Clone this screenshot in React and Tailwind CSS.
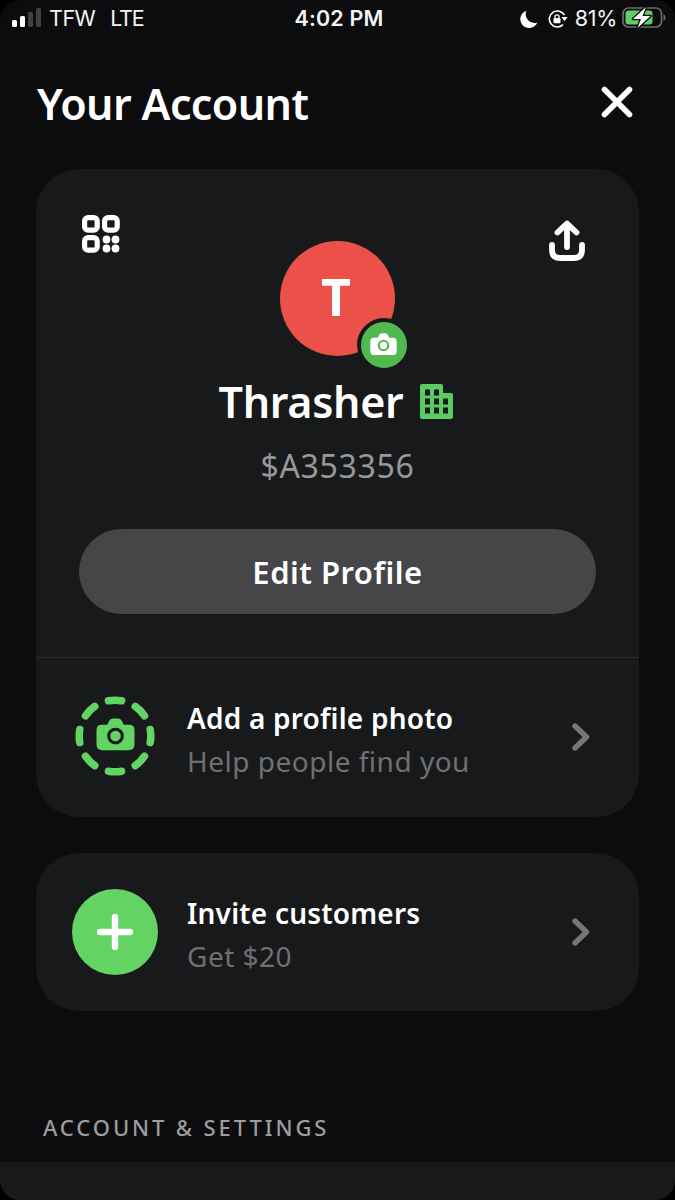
const CameraIcon = ({ className, ring }) => (
  <svg viewBox="0 0 40 34" className={className}>
    <path
      d="M6 7h5.500l2-4.200Q15 .5 17.500 .5h5q2.500 0 4 2.300l2 4.200H34q5.500 0 5.500 5.500v14.500q0 6-6 6h-27q-6 0-6-6V12.500Q.5 7 6 7z"
      fill="currentColor"
    />
    <circle cx="20" cy="18.500" r="7" fill="none" stroke={ring} strokeWidth="3.200" />
  </svg>
);

const ChevronIcon = () => (
  <svg viewBox="0 0 18 28" className="h-7 w-[18px] text-[#767779]">
    <path d="M3 3l11.500 11L3 25" fill="none" stroke="currentColor" strokeWidth="5.400" strokeLinecap="round" strokeLinejoin="round" />
  </svg>
);

function StatusBar() {
  return (
    <div className="grid h-9 grid-cols-3 items-center pl-3 pr-[9px] font-[Inter,sans-serif] text-[21.500px] leading-none text-[#f4f4f6]">
      <div className="flex items-center">
        <svg viewBox="0 0 30 20" className="h-5 w-[30px] shrink-0">
          <rect x="0" y="12" width="5" height="7" rx="1.500" fill="#fff" />
          <rect x="8" y="8" width="5" height="11" rx="1.500" fill="#fff" />
          <rect x="16" y="4" width="5" height="15" rx="1.500" fill="#404042" />
          <rect x="24" y="0" width="5" height="19" rx="1.500" fill="#404042" />
        </svg>
        <span className="ml-[7px] pt-0.5 tracking-[-0.500px]">TFW</span>
        <span className="ml-[15px] pt-0.5 tracking-[-1.300px]">LTE</span>
      </div>
      <div className="pt-0.5 text-center font-semibold tracking-[0.150px]">4:02 PM</div>
      <div className="flex items-center justify-end">
        <svg viewBox="0 0 18 18" className="mt-0.5 h-[18px] w-[18px]">
          <path d="M6.500 .8A8.800 8.800 0 1 0 17.300 12.400 8.600 8.600 0 0 1 6.500 .8z" fill="#fff" />
        </svg>
        <svg viewBox="0 0 20 18" className="ml-[10px] mt-0.5 h-[18px] w-5">
          <path d="M16.400 5.200A8 8 0 1 0 15 14.600" fill="none" stroke="#fff" strokeWidth="1.600" />
          <path d="M13.400 7h6.200l-3 4.200z" fill="#fff" />
          <rect x="5.500" y="8" width="7" height="5.200" rx="1" fill="#fff" />
          <path d="M7 8.500V6.800a2 2 0 0 1 4 0v1.700" fill="none" stroke="#fff" strokeWidth="1.300" />
        </svg>
        <span className="ml-[7px] pt-0.5 tracking-[-0.300px]">81%</span>
        <svg viewBox="0 0 44 24" className="ml-[5px] h-6 w-11">
          <rect x="1" y="2" width="38.500" height="19" rx="5.500" fill="none" stroke="#6c6c6e" strokeWidth="1.700" />
          <path d="M41.500 8q2 1.300 2 3.500t-2 3.500z" fill="#6c6c6e" />
          <rect x="3.500" y="4.500" width="27" height="14" rx="3.200" fill="#5fd068" />
          <path d="M24 1L11 13h8L15.500 22 28.500 10h-8z" fill="#fff" stroke="#0c0c0e" strokeWidth="2.600" strokeLinejoin="round" paintOrder="stroke" />
        </svg>
      </div>
    </div>
  );
}

function Avatar() {
  return (
    <div className="relative flex h-[115px] w-[115px] items-center justify-center rounded-full bg-[#ec5149]">
      <span className="pb-[5px] pr-0.5 text-[52px] font-bold leading-none text-white">T</span>
      <div className="absolute -bottom-4 -right-4 flex h-[54px] w-[54px] items-center justify-center rounded-full border-4 border-[#18191b] bg-[#52b951]">
        <CameraIcon className="mb-0.5 w-[27px] text-white" ring="#52b951" />
      </div>
    </div>
  );
}

function Row({ icon, title, subtitle }) {
  return (
    <div className="flex h-[158px] items-center pl-9 pr-[49px]">
      <div className="flex w-[86px] justify-center">{icon}</div>
      <div className="ml-[29px] flex-1 pt-[5px] text-[28px] leading-[43px]">
        <p className="font-semibold tracking-[0.200px] text-white">{title}</p>
        <p className="tracking-[0.500px] text-[#6f7072]">{subtitle}</p>
      </div>
      <ChevronIcon />
    </div>
  );
}

export default function App() {
  return (
    <div className="bg-black">
      <main className="flex h-[1200px] w-[675px] flex-col overflow-hidden rounded-[20px] bg-[#0c0c0e] font-['Noto_Sans',sans-serif]">
        <StatusBar />

        <header className="mt-[31px] flex h-[70px] items-center justify-between pl-[37px] pr-[42px]">
          <h1 className="pt-0.5 text-[43px] font-semibold leading-none tracking-[-0.600px] text-white">Your Account</h1>
          <svg viewBox="0 0 32 32" className="h-8 w-8">
            <path d="M3.500 3.500l25 25M28.500 3.500l-25 25" stroke="#fff" strokeWidth="5.600" strokeLinecap="round" />
          </svg>
        </header>

        <section className="mx-9 mt-8 h-[648px] shrink-0 rounded-[43px] bg-[#18191b]">
          <div className="flex h-[489px] flex-col items-center border-b border-[#2b2c2e] px-[43px]">
            <div className="flex w-full items-start justify-between">
              <svg viewBox="0 0 38 38" className="ml-[3px] mt-[46px] h-[38px] w-[38px]">
                <g fill="none" stroke="#fff" strokeWidth="5.200">
                  <rect x="2.600" y="2.600" width="12.600" height="12.600" rx="3.500" />
                  <rect x="22.600" y="2.600" width="12.600" height="12.600" rx="3.500" />
                  <rect x="2.600" y="22.600" width="12.600" height="12.600" rx="3.500" />
                </g>
                <g fill="#fff">
                  <circle cx="24.500" cy="24.500" r="3.900" />
                  <circle cx="33.500" cy="24.500" r="3.900" />
                  <circle cx="24.500" cy="33.500" r="3.900" />
                  <circle cx="33.500" cy="33.500" r="3.900" />
                </g>
              </svg>
              <div className="ml-[5px] mt-[72px]">
                <Avatar />
              </div>
              <svg viewBox="0 0 36 42" className="mr-[11px] mt-[51px] h-[42px] w-9">
                <path d="M18 27V4M8.500 12.500L18 3.500l9.500 9M3 25v5q0 8 8 8h14q8 0 8-8v-5" fill="none" stroke="#fff" strokeWidth="5.800" strokeLinecap="round" strokeLinejoin="round" />
              </svg>
            </div>
            <div className="mt-[19px] flex h-[52px] items-center justify-center pr-[3px]">
              <h2 className="text-[43px] font-semibold leading-none tracking-[-0.300px] text-white">Thrasher</h2>
              <svg viewBox="0 0 33 35" className="ml-[17px] h-[35px] w-[33px]">
                <path d="M2 0h19q2 0 2 2v7h8q2 0 2 2v22q0 2-2 2H2q-2 0-2-2V2Q0 0 2 0z" fill="#5dcb63" />
                <g fill="#18191b">
                  <rect x="5" y="5.500" width="5" height="6" />
                  <rect x="14" y="5.500" width="5" height="6" />
                  <rect x="5" y="14.500" width="5" height="6" />
                  <rect x="14" y="14.500" width="5" height="6" />
                  <rect x="23" y="14.500" width="5" height="6" />
                  <rect x="5" y="23.500" width="5" height="6" />
                  <rect x="14" y="23.500" width="5" height="6" />
                  <rect x="23" y="23.500" width="5" height="6" />
                </g>
              </svg>
            </div>
            <p className="mt-[17px] text-[32px] leading-[44px] tracking-[0.700px] text-[#97989a]">$A353356</p>
            <button className="mt-[41px] h-[85px] w-full rounded-full bg-[#464648] pt-0.5 text-[31px] font-semibold tracking-[0.500px] text-white">Edit Profile</button>
          </div>
          <Row
            icon={
              <div className="relative mb-[3px] flex h-20 w-20 items-center justify-center text-[#63d463]">
                <svg viewBox="0 0 80 80" className="absolute inset-0 h-20 w-20">
                  <circle cx="40" cy="40" r="35.800" pathLength="80" fill="none" stroke="currentColor" strokeWidth="7.500" strokeDasharray="4.700 5.300" strokeDashoffset="2.350" strokeLinecap="round" />
                </svg>
                <CameraIcon className="mb-0.5 w-[39px]" ring="#18191b" />
              </div>
            }
            title="Add a profile photo"
            subtitle="Help people find you"
          />
        </section>

        <section className="mx-9 mt-9 shrink-0 rounded-[43px] bg-[#18191b]">
          <Row
            icon={
              <div className="flex h-[86px] w-[86px] items-center justify-center rounded-full bg-[#63d463]">
                <svg viewBox="0 0 36 36" className="h-9 w-9">
                  <path d="M18 3v30M3 18h30" stroke="#fff" strokeWidth="6.400" strokeLinecap="round" />
                </svg>
              </div>
            }
            title="Invite customers"
            subtitle="Get $20"
          />
        </section>

        <h3 className="mt-[100px] pl-[43px] text-[22px] font-medium leading-8 tracking-[2.900px] text-[#9b9c9e]">ACCOUNT &amp; SETTINGS</h3>
        <div className="mt-[19px] flex-1 bg-[#18191b]" />
      </main>
    </div>
  );
}
